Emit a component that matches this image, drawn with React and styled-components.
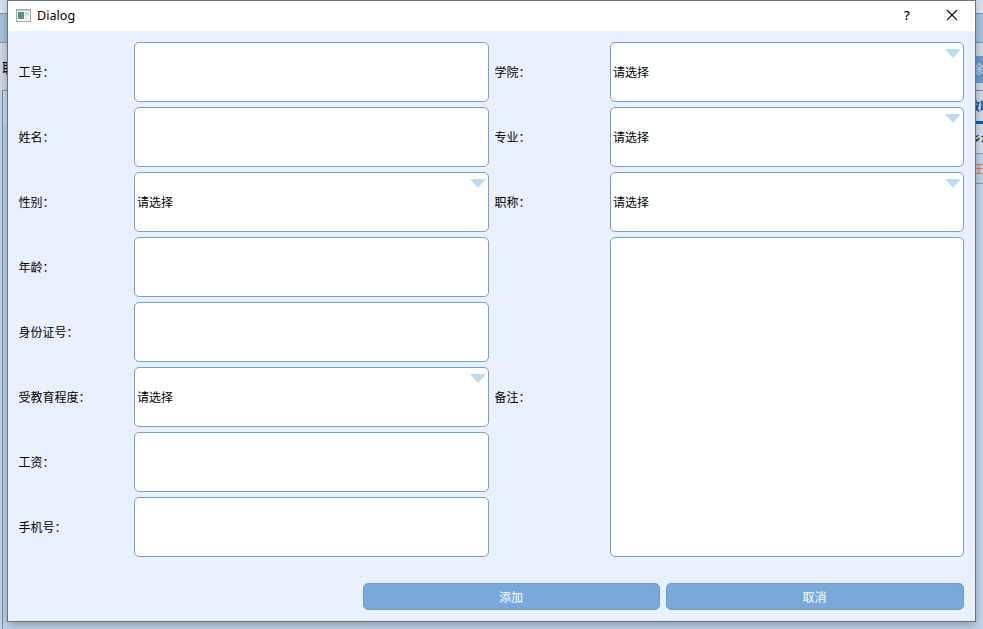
import React from 'react';
import styled, { createGlobalStyle } from 'styled-components';

const Global = createGlobalStyle`
  * { box-sizing: border-box; }
  body { margin: 0; overflow: hidden; font: 12px/16px "Noto Sans CJK SC", sans-serif; color: #000; }
`;
const Screen = styled.div`
  position: relative;
  width: 983px;
  height: 629px;
  overflow: hidden;
  background: #c6d8ec;
`;
const Backdrop = styled.div`
  display: flex;
  flex-direction: column;
  height: 100%;
`;
const MenuStrip = styled.div`
  height: 13px;
  flex: none;
  background: linear-gradient(#d3dfec, #e6eef8);
`;
const Toolbar = styled.div`
  height: 30px;
  flex: none;
  background: #abc6e2;
  border-top: 1px solid #7199c2;
  border-bottom: 1px solid #7b9fc6;
`;
const SearchRow = styled.div`
  display: flex;
  justify-content: space-between;
  align-items: center;
  height: 47px;
  flex: none;
  padding-left: 2px;
  background: #d5deea;
  font-size: 14px;
`;
const DeleteButton = styled.div`
  display: flex;
  justify-content: flex-end;
  align-items: center;
  width: 40px;
  height: 27px;
  margin-top: 5px;
  font-size: 12px;
  background: #6d9bcb;
  color: #dceaf8;
`;
const Table = styled.div`
  display: grid;
  grid-template-columns: 1fr 60px;
  grid-template-rows: 33px 30px 30px 1fr;
  flex: 1;
  margin-left: 2px;
  border-left: 1px solid #7290b0;
  border-top: 1px solid #7290b0;
`;
const HeaderCorner = styled.div`
  grid-area: 1 / 1;
  background: #d9e1ea;
`;
const TableCell = styled.div`
  grid-column: 2;
  display: flex;
  justify-content: flex-end;
  align-items: center;
  white-space: nowrap;
  font-weight: ${(p) => (p.$head ? 700 : 400)};
  color: ${(p) => p.$color};
  background: ${(p) => p.$bg};
  border-bottom: ${(p) => (p.$head ? '3px solid #0a58ad' : '1px solid #7f9fc6')};
`;
const CellText = styled.span`
  margin-right: -${(p) => p.$overhang}px;
`;
const Dialog = styled.section`
  position: absolute;
  left: 7px;
  top: 0;
  width: 969px;
  height: 622px;
  border: 1px solid #6a737d;
  background: #e8f0fb;
  box-shadow: 0 3px 10px rgba(30, 50, 75, 0.4);
`;
const TitleBar = styled.header`
  display: flex;
  align-items: center;
  height: 30px;
  padding: 0 17px 2px 8px;
  background: #fff;
`;
const Title = styled.h1`
  margin: 2px auto 0 6px;
  font: 12.6px/16px "Noto Sans", sans-serif;
`;
const HelpButton = styled.span`
  width: 12px;
  margin-right: 33px;
  text-align: center;
  font: 500 13px/16px "Noto Sans", sans-serif;
`;
const Form = styled.form`
  display: grid;
  grid-template-columns: 115px 355px 6px 115px 354px;
  grid-template-rows: repeat(8, 60px);
  row-gap: 5px;
  padding: 11px 0 0 11px;
`;
const Label = styled.label`
  grid-column: ${(p) => (p.$right ? 4 : 1)};
  grid-row: ${(p) => p.$row} / span ${(p) => p.$span || 1};
  align-self: center;
  margin-left: -0.5px;
`;
const Field = styled.div`
  grid-column: ${(p) => (p.$right ? 5 : 2)};
  grid-row: ${(p) => p.$row} / span ${(p) => p.$span || 1};
  display: flex;
  align-items: center;
  justify-content: space-between;
  padding: 0 2px;
  border: 1px solid #76a0c8;
  border-radius: 5px;
  background: #fff;
`;
const Arrow = styled.svg`
  align-self: flex-start;
  margin-top: 6px;
`;
const Actions = styled.footer`
  display: flex;
  gap: 6px;
  padding: 26px 11px 0 355px;
`;
const ActionButton = styled.button`
  width: ${(p) => p.$width}px;
  height: 27px;
  padding: 0 1px 0 0;
  border: 1px solid #6c9bca;
  border-radius: 5px;
  background: #78a9da;
  color: #fff;
  font: inherit;
`;

const fields = [
  { row: 1, label: '工号：' },
  { row: 2, label: '姓名：' },
  { row: 3, label: '性别：', select: true },
  { row: 4, label: '年龄：' },
  { row: 5, label: '身份证号：' },
  { row: 6, label: '受教育程度：', select: true },
  { row: 7, label: '工资：' },
  { row: 8, label: '手机号：' },
  { row: 1, label: '学院：', select: true, right: true },
  { row: 2, label: '专业：', select: true, right: true },
  { row: 3, label: '职称：', select: true, right: true },
  { row: 4, span: 5, label: '备注：', right: true },
];

function WindowIcon() {
  return (
    <svg width="15" height="13" viewBox="0 0 15 13">
      <defs>
        <linearGradient id="pane" x1="0" y1="0" x2="1" y2="1">
          <stop offset="0" stopColor="#4f8c9c" />
          <stop offset="1" stopColor="#579a72" />
        </linearGradient>
      </defs>
      <rect x=".5" y=".5" width="14" height="12" fill="#f2f4f5" stroke="#a3a9ad" />
      <path d="M1 1.5h13" stroke="#c5ccd1" />
      <rect x="2" y="3" width="6" height="7" fill="url(#pane)" />
      <rect x="9" y="3" width="4" height="4" fill="#d5dfe3" />
      <rect x="9" y="8" width="2" height="2" fill="#dbe2e6" />
    </svg>
  );
}

export default function App() {
  return (
    <Screen>
      <Global />
      <Backdrop>
        <MenuStrip />
        <Toolbar />
        <SearchRow>
          <span>职</span>
          <DeleteButton>删除</DeleteButton>
        </SearchRow>
        <Table>
          <HeaderCorner />
          <TableCell $head $color="#174f91" $bg="#d5deea">
            <CellText $overhang={9}>教职</CellText>
          </TableCell>
          <TableCell $color="#111" $bg="#dce3ea">
            <CellText $overhang={10}>乡村</CellText>
          </TableCell>
          <TableCell $color="#e87a3c" $bg="#c6d6ea">
            <CellText $overhang={14}>王二</CellText>
          </TableCell>
        </Table>
      </Backdrop>
      <Dialog>
        <TitleBar>
          <WindowIcon />
          <Title>Dialog</Title>
          <HelpButton>?</HelpButton>
          <svg width="12" height="12" viewBox="0 0 12 12">
            <path d="M1 1l10 10M11 1L1 11" stroke="#111" strokeWidth="1.1" />
          </svg>
        </TitleBar>
        <Form>
          {fields.map((f) => (
            <React.Fragment key={f.label}>
              <Label $row={f.row} $span={f.span} $right={f.right}>{f.label}</Label>
              <Field $row={f.row} $span={f.span} $right={f.right}>
                {f.select && <span>请选择</span>}
                {f.select && (
                  <Arrow width="16" height="10" viewBox="0 0 16 10">
                    <path d="M0 0h16L8 9z" fill="#bfdcef" />
                  </Arrow>
                )}
              </Field>
            </React.Fragment>
          ))}
        </Form>
        <Actions>
          <ActionButton $width={297}>添加</ActionButton>
          <ActionButton $width={298}>取消</ActionButton>
        </Actions>
      </Dialog>
    </Screen>
  );
}
